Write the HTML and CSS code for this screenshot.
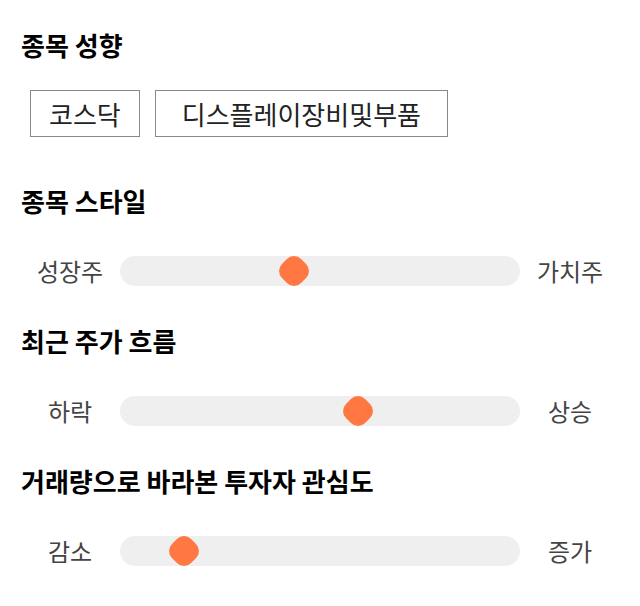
FILE: index.html
```html
<!DOCTYPE html>
<html>
<link rel="stylesheet" href="styles.css">
<head>
	<title>종목 성향</title>
</head>

<body>
	<div class="main">
		<div class="section section-first">
			<h2 class="title title-first">종목 성향</h2>
			<div class="chips">
				<span class="chip chip-short">코스닥</span>
				<span class="chip">디스플레이장비및부품</span>
			</div>
		</div>

		<div class="section">
			<h2 class="title">종목 스타일</h2>
			<div class="slider">
				<span class="side">성장주</span>
				<div class="track">
					<span class="thumb" style="left: 43.5%"></span>
				</div>
				<span class="side">가치주</span>
			</div>
		</div>

		<div class="section">
			<h2 class="title">최근 주가 흐름</h2>
			<div class="slider">
				<span class="side">하락</span>
				<div class="track">
					<span class="thumb" style="left: 59.6%"></span>
				</div>
				<span class="side">상승</span>
			</div>
		</div>

		<div class="section">
			<h2 class="title">거래량으로 바라본 투자자 관심도</h2>
			<div class="slider">
				<span class="side">감소</span>
				<div class="track">
					<span class="thumb" style="left: 16%"></span>
				</div>
				<span class="side">증가</span>
			</div>
		</div>
	</div>
</body>
</html>
```

FILE: styles.css
```css
body {
	margin: 0;
	background: #fff;
	font-family: "Noto Sans CJK KR", "Noto Sans", sans-serif;
}

.main {
	padding: 29px 20px 20px 20px;
}

.section {
	margin-bottom: 39px;
}

.section-first {
	margin-bottom: 48px;
}

.title {
	margin: 0 0 39px 0;
	padding-left: 1px;
	font-size: 26px;
	line-height: 32px;
	font-weight: bold;
	color: #000;
}

.title-first {
	margin-bottom: 29px;
}

.chips {
	display: flex;
	gap: 15px;
	padding-left: 10px;
}

.chip {
	display: block;
	height: 47px;
	box-sizing: border-box;
	padding: 0 26px;
	border: 1px solid #888;
	font-size: 26px;
	line-height: 45px;
	color: #222;
}

.chip-short {
	padding: 0 18px;
}

.slider {
	display: flex;
	align-items: center;
	height: 30px;
}

.side {
	width: 100px;
	text-align: center;
	font-size: 24px;
	line-height: 30px;
	color: #444;
}

.track {
	position: relative;
	flex: 1;
	height: 30px;
	border-radius: 15px;
	background: #efefef;
}

.thumb {
	position: absolute;
	top: 50%;
	width: 27px;
	height: 27px;
	border-radius: 10px;
	background: #ff7741;
	transform: translate(-50%, -50%) rotate(45deg);
}
```
